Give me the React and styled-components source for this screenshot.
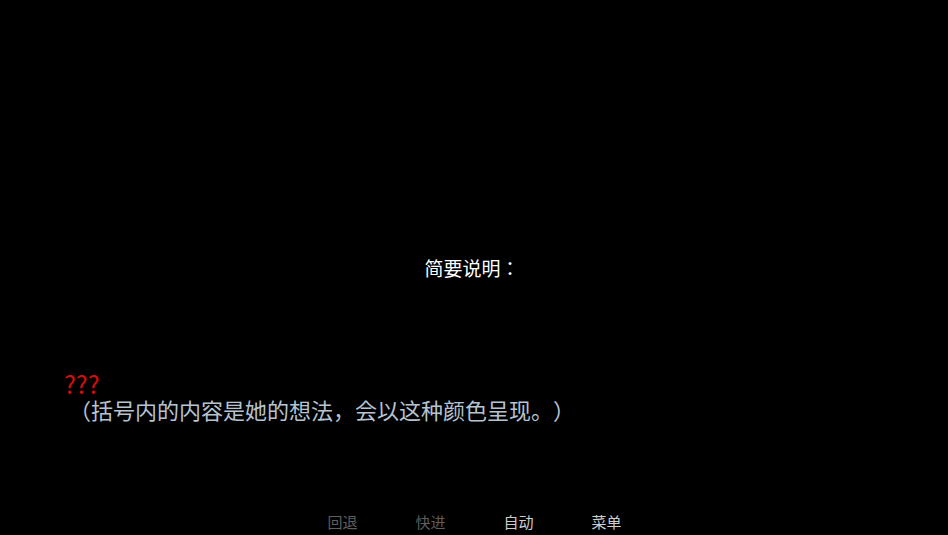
import styled, { createGlobalStyle } from "styled-components";

const GlobalStyle = createGlobalStyle`
  html, body {
    margin: 0;
    padding: 0;
    background: #000;
  }
  body {
    font-family: "Noto Sans CJK JP", "Noto Sans CJK SC", "DejaVu Sans", sans-serif;
    text-spacing-trim: space-all;
  }
`;

const Screen = styled.div`
  position: relative;
  width: 100%;
  height: 535px;
  background: #000;
  overflow: hidden;
  display: flex;
  align-items: center;
  justify-content: center;
`;

const Caption = styled.div`
  color: #ffffff;
  font-size: 19px;
  line-height: 24px;
  margin-right: 4px;
`;

// textbox overlays the scene
const TextBox = styled.div`
  position: absolute;
  left: 0;
  right: 0;
  top: 370px;
  padding-left: 64px;
  display: flex;
  flex-direction: column;
`;

const Speaker = styled.div`
  color: #d40d0d;
  font-size: 25px;
  line-height: 26px;
`;

const Line = styled.div`
  color: #b6c3d0;
  font-size: 22px;
  line-height: 26px;
  margin-left: 5px;
`;

const QuickMenu = styled.div`
  position: absolute;
  left: 0;
  right: 0;
  bottom: 0;
  height: 26px;
  display: flex;
  justify-content: center;
  gap: 58px;
  padding-left: 1px;
`;

const QuickButton = styled.div`
  font-size: 15px;
  line-height: 26px;
  color: ${(p) => (p.$active ? "#cdcdcd" : "#5e5e5e")};
`;

const buttons = [
  { label: "回退", active: false },
  { label: "快进", active: false },
  { label: "自动", active: true },
  { label: "菜单", active: true },
];

export default function App() {
  return (
    <>
      <GlobalStyle />
      <Screen>
        <Caption>简要说明：</Caption>
        <TextBox>
          <Speaker>???</Speaker>
          <Line>（括号内的内容是她的想法，会以这种颜色呈现。）</Line>
        </TextBox>
        <QuickMenu>
          {buttons.map((b) => (
            <QuickButton key={b.label} $active={b.active}>
              {b.label}
            </QuickButton>
          ))}
        </QuickMenu>
      </Screen>
    </>
  );
}
